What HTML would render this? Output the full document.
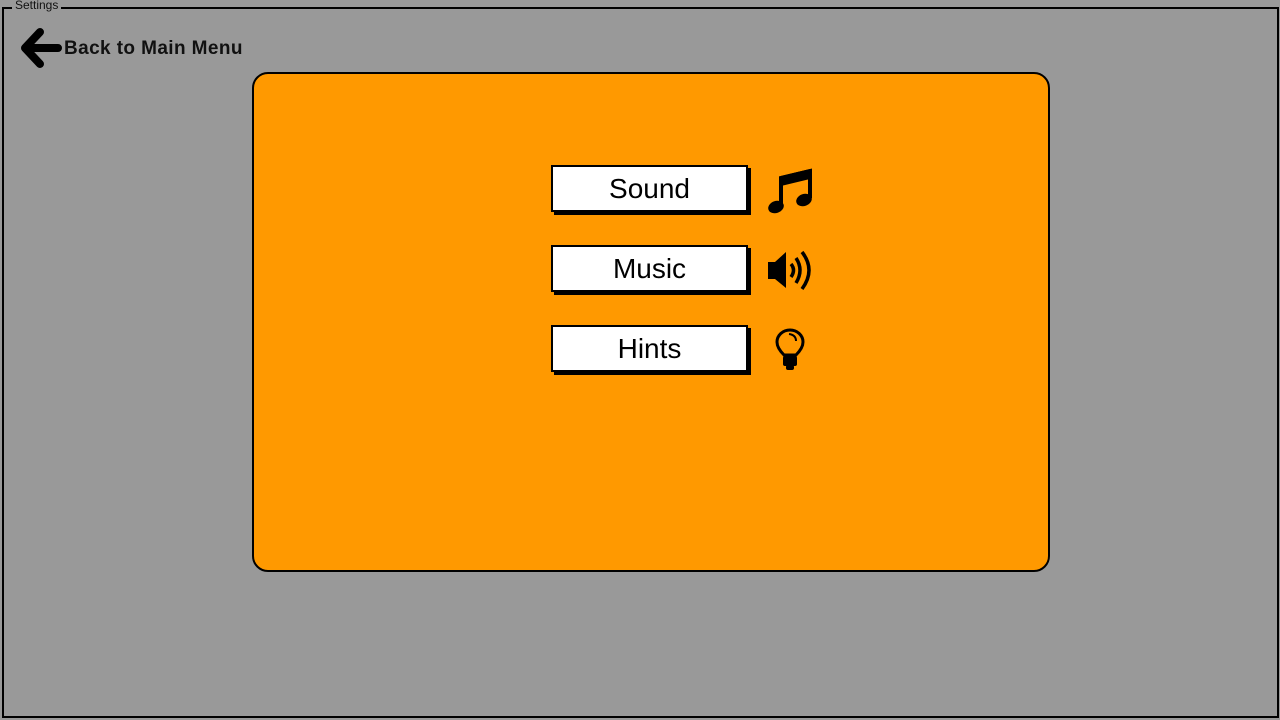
<!DOCTYPE html>
<html><head><style>
body{margin:0;width:1280px;height:720px;background:#999;position:relative;overflow:hidden;font-family:"Liberation Sans",sans-serif}
.frame{position:absolute;left:2px;top:7px;width:1273px;height:707px;border:2px solid #000}
.legend{position:absolute;left:12px;top:-1px;background:#999;padding:0 3px;font-size:12px;line-height:12px;color:#111}
.back{position:absolute;left:64px;top:38px;font-size:19px;font-weight:bold;color:#111;letter-spacing:0.4px}
.panel{position:absolute;left:252px;top:72px;width:794px;height:496px;background:#f90;border:2px solid #000;border-radius:16px}
.btn{position:absolute;left:551px;width:193px;height:43px;background:#fff;border:2px solid #000;box-shadow:3px 3px 0 #000;text-align:center;font-size:28px;line-height:43px;color:#000}
</style></head><body>
<div class="frame"></div>
<div class="legend">Settings</div>
<svg style="position:absolute;left:20px;top:27px" width="42" height="44" viewBox="0 0 42 44"><path d="M20 5 L5 21 L20 37 M6 21 L38 21" stroke="#000" stroke-width="8" fill="none" stroke-linecap="round" stroke-linejoin="round"/></svg>
<div class="back">Back to Main Menu</div>
<div class="panel"></div>
<div class="btn" style="top:165px">Sound</div>
<div class="btn" style="top:245px">Music</div>
<div class="btn" style="top:325px">Hints</div>
<svg style="position:absolute;left:766px;top:168px" width="48" height="48" viewBox="0 0 48 48">
<path d="M15 38 V10 L44 3 V30" stroke="#000" stroke-width="4" fill="none"/>
<path d="M15 8 L44 1 V11 L15 18Z" fill="#000"/>
<ellipse cx="10" cy="39" rx="8" ry="6" transform="rotate(-20 10 39)" fill="#000"/><ellipse cx="38" cy="32" rx="8" ry="6" transform="rotate(-20 38 32)" fill="#000"/>
</svg>
<svg style="position:absolute;left:766px;top:250px" width="50" height="42" viewBox="0 0 50 42">
<path d="M2 12 H9 L20 2 V38 L9 29 H2Z" fill="#000"/>
<path d="M25 14 Q30 20 25 27" stroke="#000" stroke-width="3.5" fill="none"/>
<path d="M30 8 Q38 20 30 33" stroke="#000" stroke-width="3.5" fill="none"/>
<path d="M36 2 Q50 20 36 39" stroke="#000" stroke-width="3.5" fill="none"/>
</svg>
<svg style="position:absolute;left:774px;top:328px" width="34" height="44" viewBox="0 0 34 44">
<path d="M10 27 Q3 20 3 14 A13 12 0 0 1 29 14 Q29 20 22 27Z" fill="none" stroke="#000" stroke-width="3"/>
<path d="M15 6 Q22 7 22 13" stroke="#000" stroke-width="2" fill="none"/>
<rect x="9" y="28" width="14" height="10" rx="2" fill="#000"/><rect x="12" y="37" width="8" height="5" rx="2" fill="#000"/>
</svg>
</body></html>
